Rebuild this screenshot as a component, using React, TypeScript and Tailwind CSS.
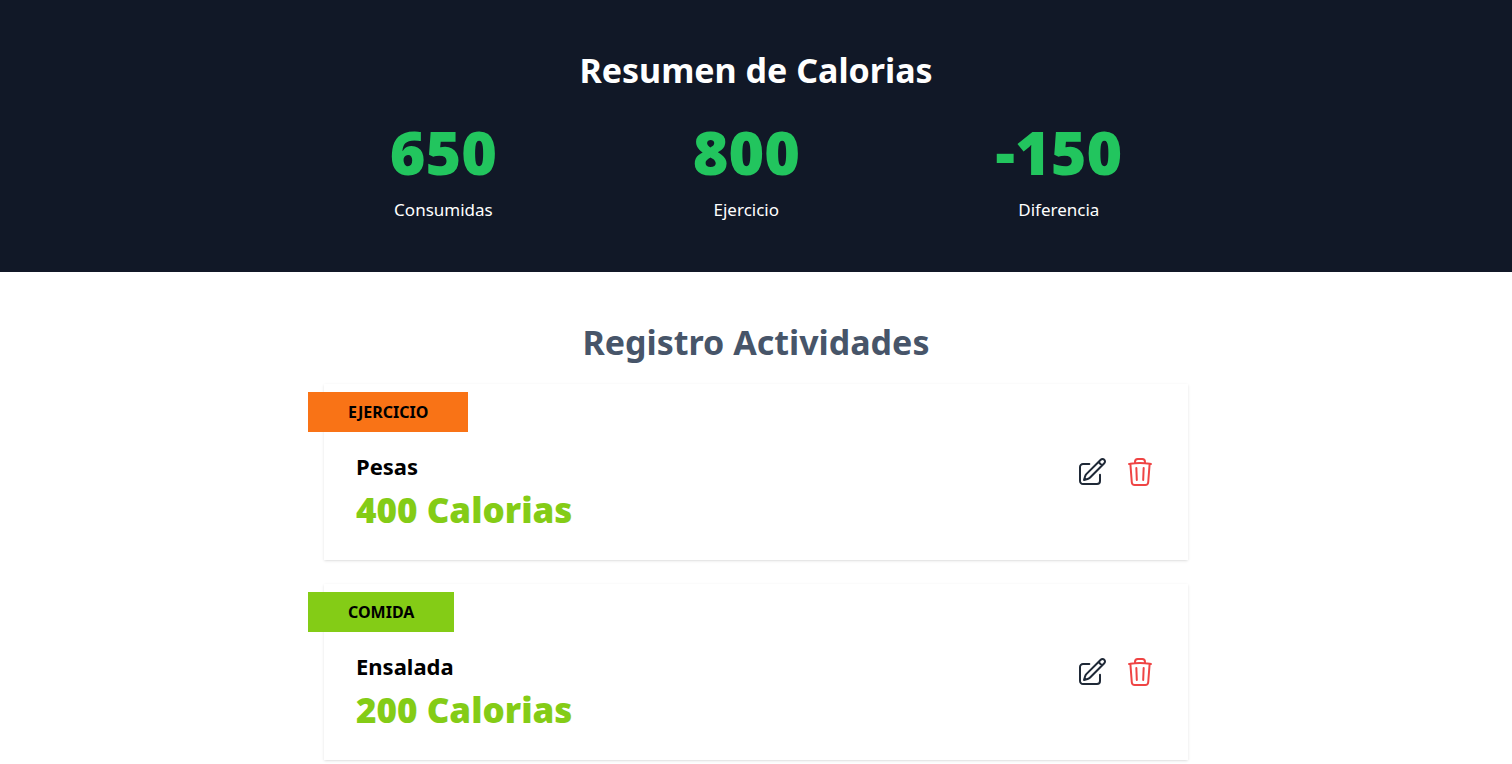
import { HiOutlinePencilSquare, HiOutlineTrash } from "react-icons/hi2";

type Category = "Ejercicio" | "Comida";

type Activity = {
  id: number;
  category: Category;
  name: string;
  calories: number;
};

const activities: Activity[] = [
  { id: 1, category: "Ejercicio", name: "Pesas", calories: 400 },
  { id: 2, category: "Comida", name: "Ensalada", calories: 200 },
];

const badgeColors: Record<Category, string> = {
  Ejercicio: "bg-[#f97316]",
  Comida: "bg-[#84cc16]",
};

function CalorieDisplay({ calories, text }: { calories: number; text: string }) {
  return (
    <div className="flex flex-col items-center gap-3.5 text-[17px] leading-7 text-white">
      <span className="text-[61px] leading-[60px] font-black text-[#22c55e]">{calories}</span>
      <span>{text}</span>
    </div>
  );
}

function ActivityCard({ activity }: { activity: Activity }) {
  return (
    <article className="flex items-center justify-between bg-white p-8 shadow-[0_1px_3px_0_rgba(0,0,0,0.1),0_1px_2px_-1px_rgba(0,0,0,0.1)]">
      <div className="relative -mb-0.5 flex flex-col gap-2 pt-[34px]">
        <p
          className={`absolute -top-6 -left-12 px-10 py-2 text-base font-bold uppercase text-black ${badgeColors[activity.category]}`}
        >
          {activity.category}
        </p>
        <h3 className="text-[22px] leading-8 font-bold text-black">{activity.name}</h3>
        <p className="text-[35px] leading-10 font-black text-[#84cc16]">
          {activity.calories} Calorias
        </p>
      </div>
      <div className="flex items-center gap-4">
        <button type="button" aria-label="Editar">
          <HiOutlinePencilSquare className="size-8 text-[#1f2937]" />
        </button>
        <button type="button" aria-label="Eliminar">
          <HiOutlineTrash className="size-8 text-[#ef4444]" />
        </button>
      </div>
    </article>
  );
}

export default function App() {
  return (
    <div className="min-h-screen bg-white font-['Noto_Sans',sans-serif]">
      <section className="bg-[#111827] pt-[50px] pb-12">
        <div className="mx-auto flex max-w-4xl flex-col gap-8">
          <h2 className="text-center text-[34px] leading-10 font-bold text-white">
            Resumen de Calorias
          </h2>
          <div className="flex flex-col items-center justify-around gap-8 md:flex-row">
            <CalorieDisplay calories={650} text="Consumidas" />
            <CalorieDisplay calories={800} text="Ejercicio" />
            <CalorieDisplay calories={-150} text="Diferencia" />
          </div>
        </div>
      </section>
      <section className="mx-auto flex max-w-4xl flex-col gap-6 px-4 pt-[50px] pb-1">
        <h2 className="-mb-0.5 text-center text-[34px] leading-10 font-bold text-[#475569]">
          Registro Actividades
        </h2>
        {activities.map((activity) => (
          <ActivityCard key={activity.id} activity={activity} />
        ))}
      </section>
    </div>
  );
}
